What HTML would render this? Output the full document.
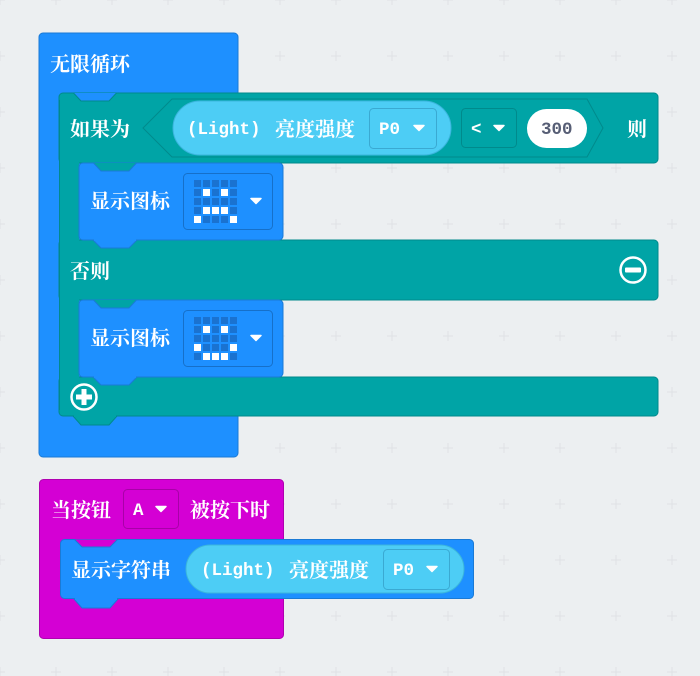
<!DOCTYPE html>
<html><head><meta charset="utf-8"><style>
html,body{margin:0;padding:0;background:#eceff1;width:700px;height:676px;overflow:hidden}
svg{display:block}
.t{font-family:"Noto Serif CJK SC","Liberation Sans",serif;font-weight:bold;font-size:20px;fill:#fff}
.m{font-family:"Liberation Mono",monospace;font-weight:bold;font-size:17.5px;fill:#fff}
</style></head><body>
<svg width="700" height="676" viewBox="0 0 700 676" xmlns="http://www.w3.org/2000/svg">
<defs>
<pattern id="g" x="-18" y="-18" width="56" height="56" patternUnits="userSpaceOnUse">
<path d="M18 13v10M13 18h10" stroke="#dfe2e5" stroke-width="1"/>
</pattern>
<g id="arr"><path d="M-5 -2.5h10l-5 5z" fill="#fff" stroke="#fff" stroke-width="1.5" stroke-linejoin="round"/></g>
</defs>
<rect width="700" height="676" fill="#eceff1"/>
<rect width="700" height="676" fill="url(#g)"/>

<rect x="39" y="33" width="199" height="424" rx="4" fill="#1e90ff" stroke="#1a7ad6"/>
<text class="t" x="50" y="71">无限循环</text>

<g fill="#00a4a6" stroke="#008a8c">
<rect x="59" y="93" width="599" height="70" rx="4"/>
<rect x="59" y="240" width="599" height="60" rx="4"/>
<rect x="59" y="377" width="599" height="39" rx="4"/>
</g>
<rect x="60" y="100" width="19" height="310" fill="#00a4a6"/>
<line x1="59.5" y1="100" x2="59.5" y2="410" stroke="#008a8c"/>
<path d="M73 92.5L81 101L109 101L117 92.5Z" fill="#1e90ff" stroke="#008a8c"/>
<rect x="72" y="88" width="46" height="4.5" fill="#1e90ff"/>
<path d="M73 416L81 425L109 425L117 416Z" fill="#00a4a6" stroke="#008a8c"/>
<rect x="74" y="414" width="42" height="3" fill="#00a4a6"/>
<text class="t" x="70" y="136">如果为</text>

<path d="M143 128L172 99H587L603 128L587 157H172Z" fill="#00a4a6" stroke="#008a8c"/>
<rect x="173" y="101" width="278" height="54" rx="27" fill="#4dcdf5" stroke="#3ab5dc"/>
<text class="m" x="187" y="134">(Light)</text>
<text class="t" x="275" y="136">亮度强度</text>
<rect x="369.5" y="108.5" width="67" height="40" rx="4" fill="#4dcdf5" stroke="#3aa9d2"/>
<text class="m" x="379" y="134">P0</text>
<use href="#arr" x="419" y="128"/>
<rect x="461.5" y="108.5" width="55" height="39" rx="4" fill="#00a4a6" stroke="#008a8c"/>
<text class="m" x="471" y="134">&lt;</text>
<use href="#arr" x="499" y="128"/>
<rect x="527" y="109" width="60" height="39" rx="19.5" fill="#fff"/>
<text class="m" x="541" y="134" style="fill:#575e75">300</text>
<text class="t" x="627" y="136">则</text>

<rect x="79" y="163" width="204" height="77" rx="4" fill="#1e90ff" stroke="#1a7ad6"/>
<path d="M93 162.5L101 171L129 171L137 162.5Z" fill="#00a4a6" stroke="#1a7ad6"/>
<rect x="92" y="158" width="46" height="4.5" fill="#00a4a6"/>
<path d="M93 240L101 248L129 248L137 240Z" fill="#1e90ff" stroke="#1a7ad6"/>
<rect x="94" y="238" width="42" height="3" fill="#1e90ff"/>
<text class="t" x="90" y="208">显示图标</text>
<rect x="183.5" y="173.5" width="89" height="56" rx="4" fill="#1e90ff" stroke="#1670c9"/>
<use href="#arr" x="256" y="201"/>

<text class="t" x="70" y="278">否则</text>
<circle cx="633" cy="270" r="12.5" fill="none" stroke="#fff" stroke-width="2.5"/>
<rect x="625" y="267.5" width="16" height="5" rx="1" fill="#fff"/>

<rect x="79" y="300" width="204" height="77" rx="4" fill="#1e90ff" stroke="#1a7ad6"/>
<path d="M93 299.5L101 308L129 308L137 299.5Z" fill="#00a4a6" stroke="#1a7ad6"/>
<rect x="92" y="295" width="46" height="4.5" fill="#00a4a6"/>
<path d="M93 377L101 385L129 385L137 377Z" fill="#1e90ff" stroke="#1a7ad6"/>
<rect x="94" y="375" width="42" height="3" fill="#1e90ff"/>
<text class="t" x="90" y="345">显示图标</text>
<rect x="183.5" y="310.5" width="89" height="56" rx="4" fill="#1e90ff" stroke="#1670c9"/>
<use href="#arr" x="256" y="338"/>

<circle cx="84" cy="397" r="12.5" fill="none" stroke="#fff" stroke-width="2.5"/>
<path d="M84 389v16M76 397h16" stroke="#fff" stroke-width="5"/>

<g>
<g fill="#1a72d0">
<rect x="194" y="180" width="7" height="7"/><rect x="203" y="180" width="7" height="7"/><rect x="212" y="180" width="7" height="7"/><rect x="221" y="180" width="7" height="7"/><rect x="230" y="180" width="7" height="7"/>
<rect x="194" y="189" width="7" height="7"/><rect x="212" y="189" width="7" height="7"/><rect x="230" y="189" width="7" height="7"/>
<rect x="194" y="198" width="7" height="7"/><rect x="203" y="198" width="7" height="7"/><rect x="212" y="198" width="7" height="7"/><rect x="221" y="198" width="7" height="7"/><rect x="230" y="198" width="7" height="7"/>
<rect x="194" y="207" width="7" height="7"/><rect x="230" y="207" width="7" height="7"/>
<rect x="203" y="216" width="7" height="7"/><rect x="212" y="216" width="7" height="7"/><rect x="221" y="216" width="7" height="7"/>
</g>
<g fill="#fff">
<rect x="203" y="189" width="7" height="7"/><rect x="221" y="189" width="7" height="7"/>
<rect x="203" y="207" width="7" height="7"/><rect x="212" y="207" width="7" height="7"/><rect x="221" y="207" width="7" height="7"/>
<rect x="194" y="216" width="7" height="7"/><rect x="230" y="216" width="7" height="7"/>
</g>
</g>
<g>
<g fill="#1a72d0">
<rect x="194" y="317" width="7" height="7"/><rect x="203" y="317" width="7" height="7"/><rect x="212" y="317" width="7" height="7"/><rect x="221" y="317" width="7" height="7"/><rect x="230" y="317" width="7" height="7"/>
<rect x="194" y="326" width="7" height="7"/><rect x="212" y="326" width="7" height="7"/><rect x="230" y="326" width="7" height="7"/>
<rect x="194" y="335" width="7" height="7"/><rect x="203" y="335" width="7" height="7"/><rect x="212" y="335" width="7" height="7"/><rect x="221" y="335" width="7" height="7"/><rect x="230" y="335" width="7" height="7"/>
<rect x="203" y="344" width="7" height="7"/><rect x="212" y="344" width="7" height="7"/><rect x="221" y="344" width="7" height="7"/>
<rect x="194" y="353" width="7" height="7"/><rect x="230" y="353" width="7" height="7"/>
</g>
<g fill="#fff">
<rect x="203" y="326" width="7" height="7"/><rect x="221" y="326" width="7" height="7"/>
<rect x="194" y="344" width="7" height="7"/><rect x="230" y="344" width="7" height="7"/>
<rect x="203" y="353" width="7" height="7"/><rect x="212" y="353" width="7" height="7"/><rect x="221" y="353" width="7" height="7"/>
</g>
</g>

<rect x="39.5" y="479.5" width="244" height="159" rx="4" fill="#d400d4" stroke="#b000b0"/>
<text class="t" x="51" y="517">当按钮</text>
<rect x="123.5" y="489.5" width="55" height="39" rx="4" fill="#d400d4" stroke="#a800a8"/>
<text class="m" x="133" y="515">A</text>
<use href="#arr" x="161" y="509"/>
<text class="t" x="190" y="517">被按下时</text>

<rect x="60.5" y="539.5" width="413" height="59" rx="4" fill="#1e90ff" stroke="#1a7ad6"/>
<path d="M74 539L82 547L110 547L118 539Z" fill="#d400d4" stroke="#1a7ad6"/>
<rect x="73" y="535" width="46" height="4" fill="#d400d4"/>
<path d="M74 599L82 608L110 608L118 599Z" fill="#1e90ff" stroke="#1a7ad6"/>
<rect x="75" y="597" width="42" height="3" fill="#1e90ff"/>
<text class="t" x="71" y="577">显示字符串</text>
<rect x="186" y="545" width="278" height="48" rx="24" fill="#4dcdf5" stroke="#3ab5dc"/>
<text class="m" x="201" y="575">(Light)</text>
<text class="t" x="289" y="577">亮度强度</text>
<rect x="383.5" y="549.5" width="66" height="40" rx="4" fill="#4dcdf5" stroke="#3aa9d2"/>
<text class="m" x="393" y="575">P0</text>
<use href="#arr" x="432" y="569"/>
</svg>
</body></html>
